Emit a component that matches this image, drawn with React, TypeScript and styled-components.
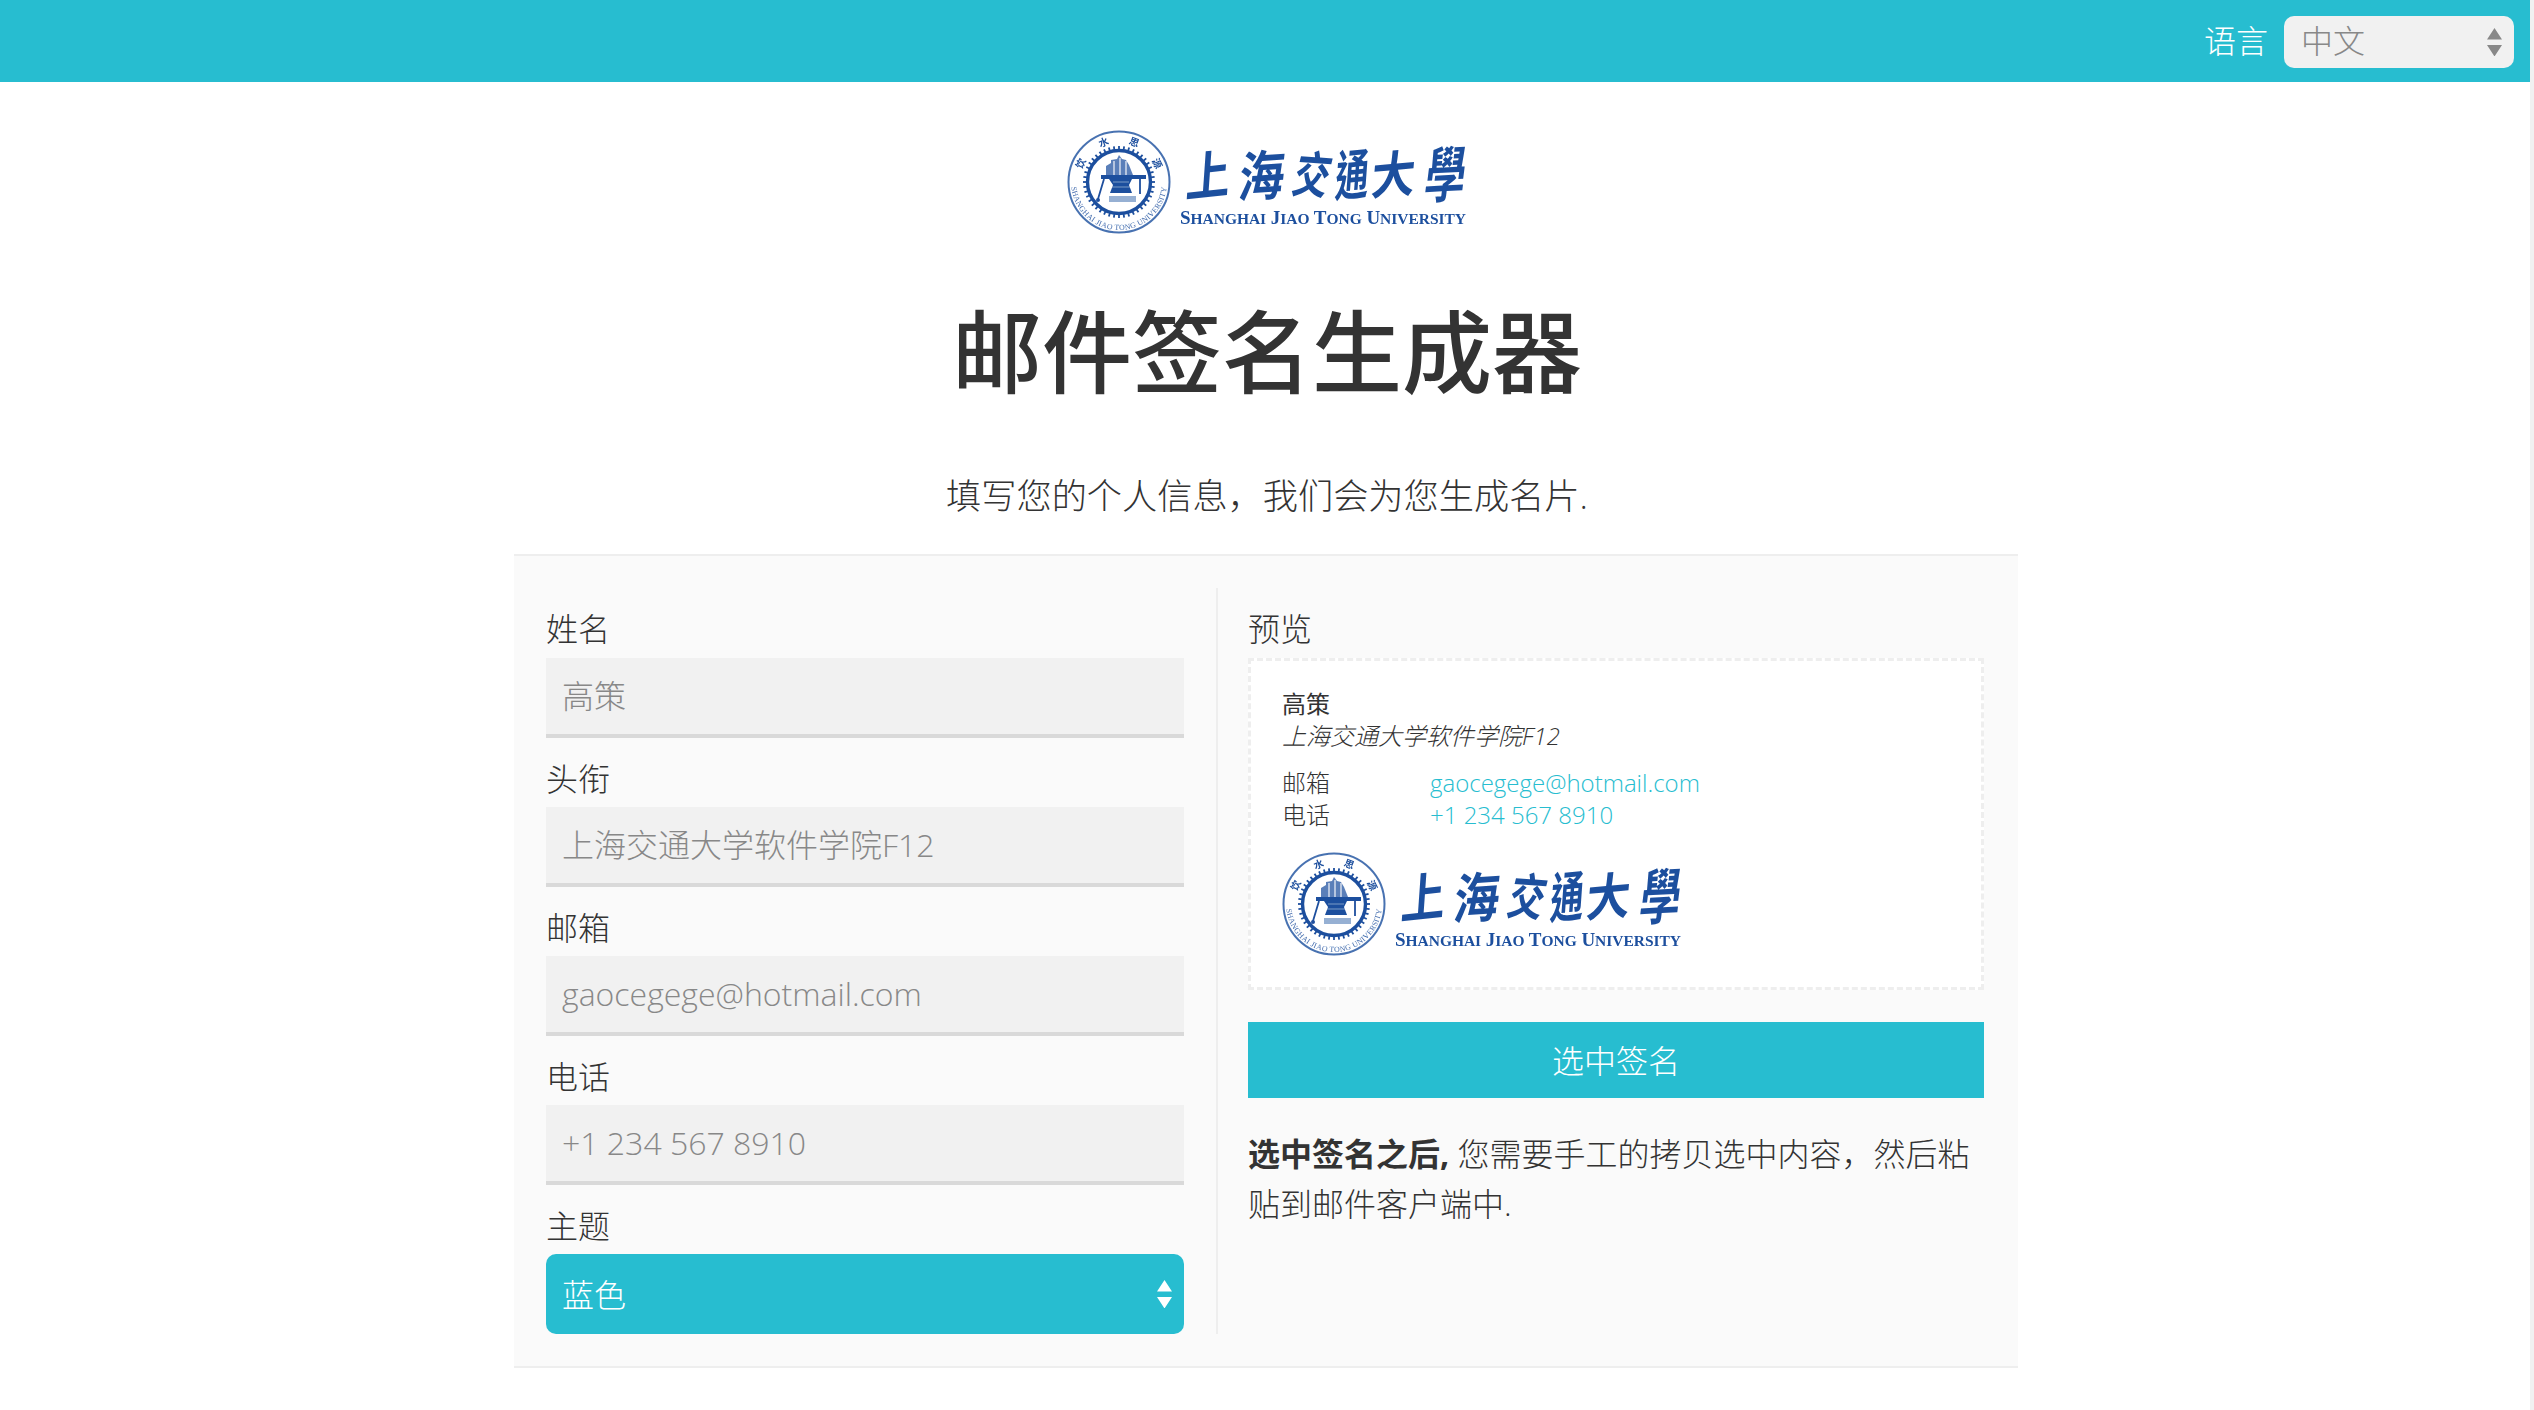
import React from "react";
import styled, { createGlobalStyle } from "styled-components";

const BLUE = "#27bdd0";
const LOGO = "#1d4f9e";

const GlobalStyle = createGlobalStyle`
  html, body {
    margin: 0;
    padding: 0;
    background: #fff;
  }
  body {
    height: 1410px;
    overflow: hidden;
    font-family: "Open Sans", "Noto Sans CJK SC", sans-serif;
    font-weight: 300;
    color: #333;
  }
  * {
    box-sizing: border-box;
  }
`;

const Page = styled.div`
  width: 2530px;
  height: 1410px;
`;

const TopBar = styled.header`
  height: 82px;
  background: ${BLUE};
  display: flex;
  align-items: center;
  justify-content: flex-end;
  padding: 2px 16px 0 0;
  gap: 16px;
`;

const TopLabel = styled.label`
  color: #fff;
  font-size: 32px;
  line-height: 52px;
  margin-top: -2px;
`;

const SelectBox = styled.div<{ $wide?: boolean }>`
  position: relative;
  width: ${(p) => (p.$wide ? "100%" : "230px")};
`;

const NativeSelect = styled.select<{ $theme?: boolean }>`
  appearance: none;
  display: block;
  width: 100%;
  height: ${(p) => (p.$theme ? "80px" : "52px")};
  border: 0;
  outline: 0;
  border-radius: 10px;
  padding: ${(p) => (p.$theme ? "0 16px" : "0 0 3px 17px")};
  font: inherit;
  font-size: 32px;
  color: ${(p) => (p.$theme ? "#fff" : "#888")};
  background: ${(p) => (p.$theme ? BLUE : "#f1f1f1")};
`;

const Arrows = styled.svg`
  position: absolute;
  top: 50%;
  right: 12px;
  transform: translateY(-50%);
`;

const Hero = styled.section`
  width: 2534px;
  display: flex;
  flex-direction: column;
  align-items: center;
  padding-top: 48px;
`;

const LogoFrame = styled.svg`
  display: block;
`;

const Title = styled.h1`
  margin: 57px 0 0;
  font-size: 90px;
  line-height: 120px;
  font-weight: 500;
  color: #333;
`;

const Lead = styled.p`
  margin: 59px 0 0;
  font-size: 35.2px;
  line-height: 50px;
  color: #333;
`;

const Panel = styled.main`
  margin: 34px 0 0 514px;
  width: 1504px;
  height: 814px;
  background: #fafafa;
  border-top: 2px solid #eee;
  border-bottom: 2px solid #eee;
  padding: 32px 34px 32px 32px;
  display: grid;
  grid-template-columns: 672px 1fr;
`;

const FormColumn = styled.form`
  padding-right: 32px;
  border-right: 2px solid #eee;
  display: flex;
  flex-direction: column;
`;

const PreviewColumn = styled.section`
  padding-left: 30px;
  display: flex;
  flex-direction: column;
`;

const FieldLabel = styled.label`
  display: block;
  height: 69px;
  padding-top: 16px;
  font-size: 32px;
  line-height: 50px;
  color: #333;
`;

const FirstLabel = styled(FieldLabel)`
  height: 70px;
`;

const TextInput = styled.input`
  display: block;
  width: 100%;
  height: 80px;
  border: 0;
  border-bottom: 4px solid #d9d9d9;
  outline: 0;
  padding: 0 16px 2px;
  font: inherit;
  font-size: 32px;
  background: #f1f1f1;
  &::placeholder {
    color: #888;
    opacity: 1;
  }
`;

const Signature = styled.div`
  height: 332px;
  border: 3px dashed #eee;
  background: #fff;
  padding: 27px 31px;
  font-size: 24px;
  line-height: 32px;
  color: #333;
`;

const SigName = styled.div`
  font-weight: 400;
`;

const SigTitle = styled.div`
  font-style: italic;
`;

const ContactGrid = styled.dl`
  margin: 15px 0 21px;
  display: grid;
  grid-template-columns: 148px 1fr;
`;

const ContactKey = styled.dt``;

const ContactValue = styled.dd`
  margin: 0;
  color: ${BLUE};
`;

const SelectButton = styled.button`
  display: block;
  width: 100%;
  height: 76px;
  margin-top: 32px;
  border: 0;
  padding: 0 0 3px;
  background: ${BLUE};
  color: #fff;
  font: inherit;
  font-size: 32px;
`;

const Hint = styled.p`
  margin: 31px 0 0;
  font-size: 32px;
  line-height: 50px;
  color: #333;
  b {
    font-weight: 700;
  }
`;

const Scroller = styled.div`
  position: fixed;
  top: 0;
  right: 0;
  width: 4px;
  height: 100%;
  background: #f1f1f1;
`;

const SelectArrows: React.FC<{ color: string }> = ({ color }) => (
  <Arrows width={15} height={28} viewBox="0 0 15 28">
    <path d="M7.5 0 15 11.5H0Z M0 17h15L7.5 28.5Z" fill={color} />
  </Arrows>
);

const sealChars = [
  { ch: "饮", angle: -64 },
  { ch: "水", angle: -21 },
  { ch: "思", angle: 21 },
  { ch: "源", angle: 64 },
];

// brush characters of the wordmark, each placed where the logo has it
const brushChars = [
  { ch: "上", x: 140, y: 65, size: 52, rot: -6, sx: 0.85 },
  { ch: "海", x: 193, y: 66, size: 54, rot: -4, sx: 0.85 },
  { ch: "交", x: 241, y: 63, size: 50, rot: 4, sx: 0.72 },
  { ch: "通", x: 284, y: 65, size: 54, rot: -6, sx: 0.62 },
  { ch: "大", x: 325, y: 63, size: 50, rot: -5, sx: 0.88 },
  { ch: "學", x: 376, y: 67, size: 60, rot: -3, sx: 0.68 },
];

// the university seal: rings, cog and anvil
const Seal: React.FC<{ idPrefix: string }> = ({ idPrefix }) => {
  const teeth = Array.from({ length: 44 }, (_, i) => (i * 360) / 44);
  return (
    <g>
      <circle cx="52" cy="52" r="50.5" fill="none" stroke={LOGO} strokeWidth="2" opacity="0.8" />
      <circle cx="52" cy="52" r="31.5" fill="none" stroke={LOGO} strokeWidth="3.4" />
      {teeth.map((a) => (
        <rect key={a} x="51.1" y="16" width="1.8" height="4" fill={LOGO} transform={`rotate(${a} 52 52)`} />
      ))}
      {sealChars.map((c) => (
        <text
          key={c.ch}
          x="52"
          y="13"
          textAnchor="middle"
          fontSize="10"
          fontWeight="700"
          fill={LOGO}
          fontFamily="'Noto Sans CJK SC', sans-serif"
          transform={`rotate(${c.angle} 52 52)`}
        >
          {c.ch}
        </text>
      ))}
      <path id={`${idPrefix}-arc`} d="M4 52a48 48 0 0 0 96 0" fill="none" />
      <text fontSize="7.8" fill={LOGO} opacity="0.85" fontFamily="'Liberation Serif', serif">
        <textPath href={`#${idPrefix}-arc`} startOffset="5" textLength="140">
          SHANGHAI JIAO TONG UNIVERSITY
        </textPath>
      </text>
      {/* building behind the anvil */}
      <path d="M39 45V36l5-3v-3l6-1 2-4 3 4 4 1 3 5 4 10z" fill={LOGO} opacity="0.72" />
      <path d="M47 31v14M53 28v17M59 31v14" stroke="#fff" strokeWidth="1.1" />
      {/* table, anvil and base */}
      <path d="M34 45h45v4H65l-3 6 3 8H43l3-8-4-6h-8z" fill={LOGO} />
      <path d="M46 52h16M44 57h20" stroke="#fff" strokeWidth="0.7" opacity="0.6" />
      <path d="M37 49 31 69M73 49v15" stroke={LOGO} strokeWidth="1.8" fill="none" />
      <circle cx="31" cy="70" r="2" fill={LOGO} />
      <rect x="42" y="66" width="27" height="6" fill={LOGO} opacity="0.45" />
    </g>
  );
};

const Logo: React.FC<{ idPrefix: string }> = ({ idPrefix }) => (
  <LogoFrame width="400" height="104" viewBox="0 0 400 104" role="img" aria-label="上海交通大学">
    <defs>
      <filter id={`${idPrefix}-soft`} x="-5%" y="-5%" width="110%" height="110%">
        <feGaussianBlur stdDeviation="0.45" />
      </filter>
    </defs>
    <g filter={`url(#${idPrefix}-soft)`}>
      <Seal idPrefix={idPrefix} />
      {brushChars.map((c) => (
        <text
          key={c.ch}
          textAnchor="middle"
          fontSize={c.size}
          fontWeight="700"
          fill={LOGO}
          fontFamily="'Noto Sans CJK TC', sans-serif"
          transform={`translate(${c.x} ${c.y}) rotate(${c.rot}) skewX(-10) scale(${c.sx} 1)`}
        >
          {c.ch}
        </text>
      ))}
      <text
        x="113"
        y="94"
        fontSize="19"
        fontWeight="700"
        fill={LOGO}
        fontFamily="'Liberation Serif', serif"
        textLength="286"
      >
        S<tspan fontSize="15.5">HANGHAI</tspan> J<tspan fontSize="15.5">IAO</tspan> T<tspan fontSize="15.5">ONG</tspan> U
        <tspan fontSize="15.5">NIVERSITY</tspan>
      </text>
    </g>
  </LogoFrame>
);

const fields = [
  { label: "头衔", placeholder: "上海交通大学软件学院F12" },
  { label: "邮箱", placeholder: "gaocegege@hotmail.com" },
  { label: "电话", placeholder: "+1 234 567 8910" },
];

const App: React.FC = () => (
  <Page>
    <GlobalStyle />
    <TopBar>
      <TopLabel>语言</TopLabel>
      <SelectBox>
        <NativeSelect defaultValue="zh">
          <option value="zh">中文</option>
          <option value="en">English</option>
        </NativeSelect>
        <SelectArrows color="#888" />
      </SelectBox>
    </TopBar>
    <Hero>
      <Logo idPrefix="top" />
      <Title>邮件签名生成器</Title>
      <Lead>填写您的个人信息，我们会为您生成名片.</Lead>
    </Hero>
    <Panel>
      <FormColumn>
        <div>
          <FirstLabel>姓名</FirstLabel>
          <TextInput placeholder="高策" />
        </div>
        {fields.map((f) => (
          <div key={f.label}>
            <FieldLabel>{f.label}</FieldLabel>
            <TextInput placeholder={f.placeholder} />
          </div>
        ))}
        <div>
          <FieldLabel>主题</FieldLabel>
          <SelectBox $wide>
            <NativeSelect $theme defaultValue="blue">
              <option value="blue">蓝色</option>
              <option value="red">红色</option>
            </NativeSelect>
            <SelectArrows color="#fff" />
          </SelectBox>
        </div>
      </FormColumn>
      <PreviewColumn>
        <FirstLabel>预览</FirstLabel>
        <Signature>
          <SigName>高策</SigName>
          <SigTitle>上海交通大学软件学院F12</SigTitle>
          <ContactGrid>
            <ContactKey>邮箱</ContactKey>
            <ContactValue>gaocegege@hotmail.com</ContactValue>
            <ContactKey>电话</ContactKey>
            <ContactValue>+1 234 567 8910</ContactValue>
          </ContactGrid>
          <Logo idPrefix="sig" />
        </Signature>
        <SelectButton type="button">选中签名</SelectButton>
        <Hint>
          <b>选中签名之后,</b> 您需要手工的拷贝选中内容，然后粘贴到邮件客户端中.
        </Hint>
      </PreviewColumn>
    </Panel>
    <Scroller />
  </Page>
);

export default App;
